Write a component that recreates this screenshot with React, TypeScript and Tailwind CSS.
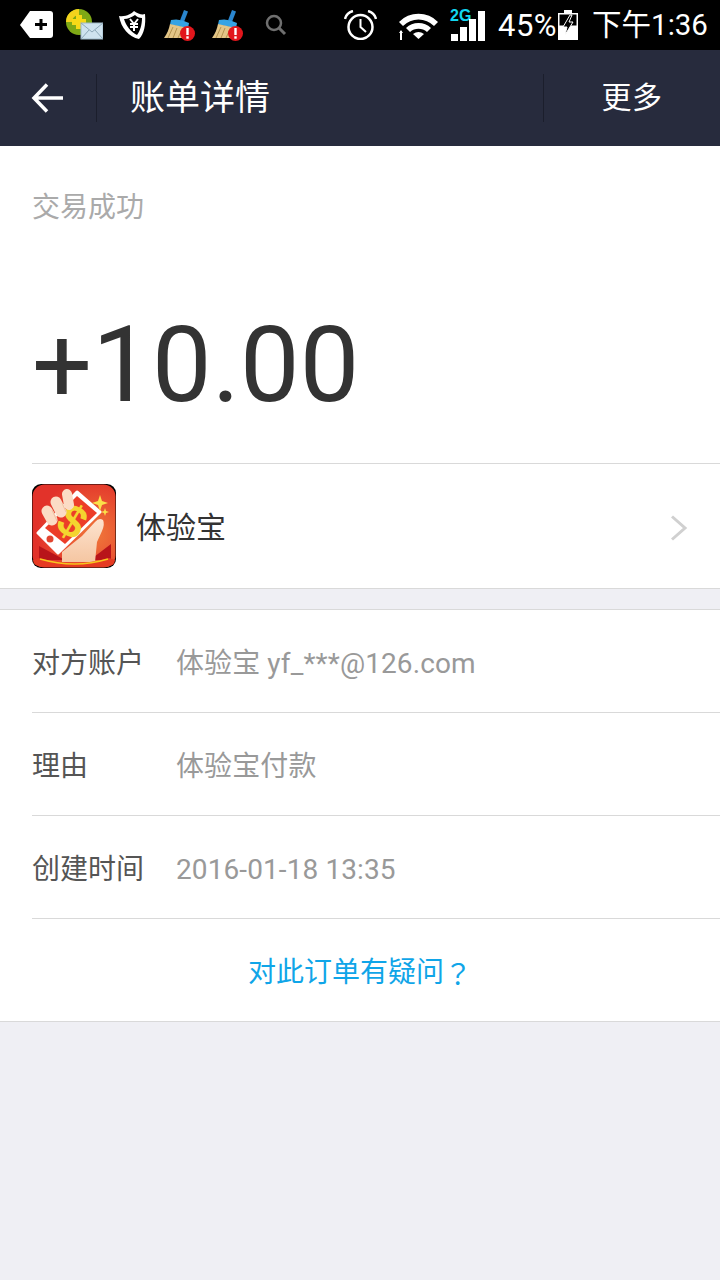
const cjk = 'font-["Roboto","Noto_Sans_CJK_SC",sans-serif]'

function Broom() {
  return (
    <svg width="32" height="32" viewBox="0 0 32 32">
      <path d="M20 0 L24 1.500 L20 12 L16 10.500 Z" fill="#2a86cf" />
      <path d="M7 10 Q16 8 25 13 L24 18.500 L6 14.500 Z" fill="#35a3e4" />
      <path d="M6 14 L24 18 C23 22 20 26 18 28 L0 28 C3 24 5 19 6 14 Z" fill="#e3c587" />
      <path d="M4 28 L9 17 M9 28 L13 18 M14 28 L18 19" stroke="#b2924f" strokeWidth="1" fill="none" />
      <circle cx="23.500" cy="23.500" r="7.500" fill="#e2161c" />
      <rect x="22.300" y="18" width="2.400" height="7" fill="#fff" />
      <rect x="22.300" y="26.300" width="2.400" height="2.400" fill="#fff" />
    </svg>
  )
}

function StatusBar() {
  return (
    <div className={`flex h-[50px] items-center bg-black pl-[20px] text-white ${cjk}`}>
      {/* notification icons */}
      <svg width="33" height="27" viewBox="0 0 33 27" className="mt-[-1px]">
        <path d="M10 0 H30 Q33 0 33 3 V24 Q33 27 30 27 H10 L0 14 Z" fill="#fff" />
        <path d="M15 13.500 H27 M21 8 V19" stroke="#000" strokeWidth="3" />
      </svg>
      <svg width="37" height="32" viewBox="0 0 37 32" className="ml-[13px]">
        <circle cx="13" cy="13" r="13" fill="#7ea815" />
        <path d="M13 0 A13 13 0 0 0 0 13 L6 13 A7 7 0 0 1 13 6 Z" fill="#f3d21c" />
        <path d="M10 6 H16 V10 H20 V16 H16 V20 H10 V16 H6 V10 H10 Z" fill="#f7d917" />
        <rect x="15" y="14" width="22" height="16" fill="#cfe3ef" stroke="#9fb9c8" />
        <path d="M15 14 L26 23 L37 14 M15 30 L23 21 M37 30 L29 21" stroke="#8da8b8" strokeWidth="1" fill="none" />
      </svg>
      <svg width="28" height="30" viewBox="0 0 28 30" className="ml-[15px]">
        <path d="M1 6 C8 7 13 4 16 1 C20 4 24 5 27 4 C28 15 26 24 21 29 C11 27 3 18 1 6 Z" fill="#fff" />
        <path d="M6 9 C10 9 14 7 17 5 C19 7 21 8 24 8 C24 15 22 21 19 25 C13 22 8 16 6 9 Z" fill="#000" />
        <path d="M12 9 L16 14 L20 9 M16 14 V21 M12 14 H20 M12 17 H20" stroke="#fff" strokeWidth="2" fill="none" />
      </svg>
      <div className="ml-[18px] mt-[2px]"><Broom /></div>
      <div className="ml-[16px] mt-[2px]"><Broom /></div>
      <svg width="22" height="22" viewBox="0 0 22 22" className="ml-[21px]">
        <circle cx="9" cy="9" r="7" stroke="#6f6f6f" strokeWidth="2.500" fill="none" />
        <path d="M14 14 L20 20" stroke="#6f6f6f" strokeWidth="3" />
      </svg>
      {/* system icons */}
      <svg width="33" height="30" viewBox="0 0 33 30" className="ml-[57px]">
        <circle cx="16.500" cy="17" r="12" stroke="#fff" strokeWidth="2.500" fill="none" />
        <path d="M16.500 9 V17 L22 22" stroke="#fff" strokeWidth="2" fill="none" />
        <path d="M1 9 C2 5 5 2 9 1 M24 1 C28 2 31 5 32 9" stroke="#fff" strokeWidth="2.500" fill="none" />
      </svg>
      <svg width="39" height="29" viewBox="0 0 39 29" className="ml-[22px]">
        <path d="M0 11 A27 27 0 0 1 39 11 L35 15 A22 22 0 0 0 4 15 Z" fill="#fff" />
        <path d="M7 17 A18 18 0 0 1 32 17 L28 21 A13 13 0 0 0 11 21 Z" fill="#fff" />
        <path d="M14 23 A9 9 0 0 1 25 23 L19.500 28 Z" fill="#fff" />
        <path d="M2 29 V20" stroke="#fff" strokeWidth="2" fill="none" />
        <path d="M2 19 L0 22 H4 Z" fill="#fff" />
      </svg>
      <div className="relative ml-[13px] h-[31px] w-[35px]">
        <span className="absolute left-[-1px] top-[-3px] font-['Liberation_Sans'] text-[16px] font-bold leading-[18px] text-[#12d6f0]">2G</span>
        <div className="absolute bottom-0 left-0 flex items-end gap-[2px]">
          <div className="h-[7px] w-[7px] bg-white" />
          <div className="h-[14px] w-[7px] bg-white" />
          <div className="h-[22px] w-[7px] bg-white" />
          <div className="h-[30px] w-[7px] bg-white" />
        </div>
      </div>
      <span className="ml-[12px] pt-[1px] text-[31px] leading-none tracking-[0.5px]">45%</span>
      <svg width="20" height="30" viewBox="0 0 20 30" className="ml-[1px]">
        <path d="M6 0 H14 V3 H20 V30 H0 V3 H6 Z" fill="#fff" />
        <rect x="1.500" y="4.500" width="17" height="11" fill="#000" />
        <path d="M12 5 L5 17 H9 L7 25 L15 12 H11 L14 5 Z" fill="#000" stroke="#fff" strokeWidth="1" />
      </svg>
      <span className="ml-[14px] whitespace-nowrap pt-[1px] text-[29.500px] leading-none">下午1:36</span>
    </div>
  )
}

function Header() {
  return (
    <div className={`flex h-[96px] items-center bg-[#272b3d] text-white ${cjk}`}>
      <div className="flex h-[48px] w-[97px] items-center justify-center border-r border-[#1b1e2c]">
        <svg width="32" height="30" viewBox="0 0 32 30" className="mr-[2px]">
          <path d="M32 15 H3 M16 1.500 L3 15 L16 28.500" stroke="#fff" strokeWidth="3.500" fill="none" />
        </svg>
      </div>
      <span className="ml-[33px] text-[35px] leading-none">账单详情</span>
      <div className="ml-auto flex h-[48px] w-[177px] items-center justify-center border-l border-[#1b1e2c]">
        <span className="text-[30px] leading-none tracking-[0.5px]">更多</span>
      </div>
    </div>
  )
}

function AppIcon() {
  return (
    <svg width="84" height="84" viewBox="0 0 84 84" className="shrink-0">
      <defs>
        <radialGradient id="bg" cx="0.75" cy="0.6" r="0.7">
          <stop offset="0" stopColor="#f0783a" />
          <stop offset="1" stopColor="#e2322a" />
        </radialGradient>
        <linearGradient id="hand" x1="0" y1="0" x2="0" y2="1">
          <stop offset="0" stopColor="#fde3cf" />
          <stop offset="1" stopColor="#f5c6a2" />
        </linearGradient>
      </defs>
      <rect width="84" height="84" rx="9" fill="#000" />
      <rect x="0.500" y="0.500" width="83" height="83" rx="12" fill="url(#bg)" />
      {/* envelope back */}
      <path d="M7 62 L33 76 L7 76 Z M79 60 L58 76 L79 76 Z" fill="#b8141a" />
      {/* phone */}
      <path d="M45 8 L68 28 L26 69 L6 49 Z" fill="#fff" stroke="#fff" strokeWidth="3" strokeLinejoin="round" />
      <path d="M45 12 L65 29 L33 60 L13 44 Z" fill="#ec3d28" />
      <circle cx="18" cy="55" r="3.500" fill="#e2442f" />
      <text x="40" y="53" fontSize="46" fontWeight="700" fontFamily="Liberation Sans" fill="#f4d52f" textAnchor="middle" transform="rotate(30 40 38)">$</text>
      {/* hand */}
      <path d="M30 78 L30 68 L50 52 L63 38 Q67 33 71 36 Q73 40 70 47 L65 58 L63 78 Z" fill="url(#hand)" />
      {/* fingers */}
      <path d="M15 27 L20 36" stroke="#fbdcc5" strokeWidth="11" strokeLinecap="round" />
      <path d="M24 18 L29 28" stroke="#fbdcc5" strokeWidth="11" strokeLinecap="round" />
      <path d="M35 10 L37 21" stroke="#fbdcc5" strokeWidth="10" strokeLinecap="round" />
      <path d="M20 26 L25 37 M30 19 L34 28" stroke="#efc3a2" strokeWidth="1" />
      {/* envelope front */}
      <path d="M7 74 Q42 84 77 74 L83 76 L83 76 Q83 83 72 83 L12 83 Q1 83 1 76 Z" fill="#e63a22" />
      <path d="M8 75 Q43 85 76 75" stroke="#f6c51e" strokeWidth="1.500" fill="none" />
      {/* sparkles */}
      <path d="M68 11 L70 17 L76 19 L70 21 L68 27 L66 21 L60 19 L66 17 Z" fill="#fbe14a" />
      <path d="M73 24 L74 27 L77 28 L74 29 L73 32 L72 29 L69 28 L72 27 Z" fill="#fbe14a" />
    </svg>
  )
}

function InfoRow({ label, value }: { label: string; value: string }) {
  return (
    <div className="ml-[32px] flex h-[103px] items-center border-b border-[#d9d9d9] pt-[5px]">
      <span className="w-[144px] text-[28px] leading-none text-[#555555]">{label}</span>
      <span className="text-[28px] leading-none tracking-[0.1px] text-[#999999]">{value}</span>
    </div>
  )
}

export default function App() {
  return (
    <div className={`flex min-h-[1280px] w-[720px] flex-col bg-[#efeff4] ${cjk}`}>
      <StatusBar />
      <Header />

      {/* Amount */}
      <div className="border-b border-[#d9d9d9] bg-white">
        <div className="ml-[32px] h-[318px] border-b border-[#d9d9d9] pt-[47px]">
          <div className="text-[28px] leading-[30px] text-[#aaaaaa]">交易成功</div>
          <div className="mt-[78px] text-[106px] font-normal leading-[128px] tracking-[0.2px] text-[#333333]">+10.00</div>
        </div>
        <div className="flex h-[124px] items-center pl-[32px] pr-[32px]">
          <AppIcon />
          <span className="ml-[20px] pt-[4px] text-[30px] leading-none text-[#333333]">体验宝</span>
          <svg width="18" height="26" viewBox="0 0 18 26" className="ml-auto mt-[3px]">
            <path d="M2 1.500 L15 13 L2 24.500" stroke="#d0d0d0" strokeWidth="3" fill="none" />
          </svg>
        </div>
      </div>

      {/* Details */}
      <div className="mt-[20px] border-y border-[#d9d9d9] bg-white">
        <InfoRow label="对方账户" value="体验宝 yf_***@126.com" />
        <InfoRow label="理由" value="体验宝付款" />
        <InfoRow label="创建时间" value="2016-01-18 13:35" />
        <div className="flex h-[102px] items-center justify-center pt-[5px] text-[28px] leading-none text-[#10a5e8]">
          对此订单有疑问<span className='font-["Noto_Sans_CJK_TC",sans-serif]'>？</span>
        </div>
      </div>
    </div>
  )
}
